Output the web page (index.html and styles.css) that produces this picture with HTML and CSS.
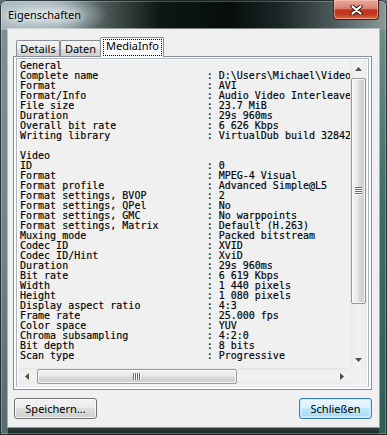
FILE: index.html
```html
<!DOCTYPE html>
<html lang="de">
  <head>
    <meta charset="UTF-8" />
    <title>Eigenschaften</title>
    <link rel="stylesheet" href="styles.css">
  </head>
  <body>
    <div class="window">
      <div class="titlebar">
        <span class="title">Eigenschaften</span>
        <button class="close" aria-label="Schließen">
          <svg width="13" height="10" viewBox="0 0 13 10">
            <path d="M2.5 1.5 L10.5 8.5 M10.5 1.5 L2.5 8.5" stroke="#3b1b14" stroke-width="4.2" stroke-linecap="round" />
            <path d="M2.5 1.5 L10.5 8.5 M10.5 1.5 L2.5 8.5" stroke="#ffffff" stroke-width="2.2" stroke-linecap="round" />
          </svg>
        </button>
      </div>

      <div class="client">
        <div class="tabs">
          <div class="tab tab-details">Details</div>
          <div class="tab tab-daten">Daten</div>
          <div class="tab tab-active"><span class="focus">MediaInfo</span></div>
        </div>

        <div class="panel">
          <div class="listbox">
<pre class="report">General
Complete name                  : D:\Users\Michael\Videos\Urlaub\clip.avi
Format                         : AVI
Format/Info                    : Audio Video Interleave
File size                      : 23.7 MiB
Duration                       : 29s 960ms
Overall bit rate               : 6 626 Kbps
Writing library                : VirtualDub build 32842/release

Video
ID                             : 0
Format                         : MPEG-4 Visual
Format profile                 : Advanced Simple@L5
Format settings, BVOP          : 2
Format settings, QPel          : No
Format settings, GMC           : No warppoints
Format settings, Matrix        : Default (H.263)
Muxing mode                    : Packed bitstream
Codec ID                       : XVID
Codec ID/Hint                  : XviD
Duration                       : 29s 960ms
Bit rate                       : 6 619 Kbps
Width                          : 1 440 pixels
Height                         : 1 080 pixels
Display aspect ratio           : 4:3
Frame rate                     : 25.000 fps
Color space                    : YUV
Chroma subsampling             : 4:2:0
Bit depth                      : 8 bits
Scan type                      : Progressive</pre>

            <div class="vscroll">
              <div class="arrow">
                <svg width="7" height="4" viewBox="0 0 7 4"><path d="M3.5 0 L7 4 L0 4 Z" fill="#4d4d4d" /></svg>
              </div>
              <div class="thumb thumb-v">
                <svg width="7" height="8" viewBox="0 0 7 8">
                  <path d="M0 0.5 H7 M0 2.5 H7 M0 4.5 H7 M0 6.5 H7" stroke="#6b6b6b" />
                  <path d="M0 1.5 H7 M0 3.5 H7 M0 5.5 H7 M0 7.5 H7" stroke="#fafafa" />
                </svg>
              </div>
              <div class="track"></div>
              <div class="arrow">
                <svg width="7" height="4" viewBox="0 0 7 4"><path d="M0 0 L7 0 L3.5 4 Z" fill="#4d4d4d" /></svg>
              </div>
            </div>

            <div class="hscroll">
              <div class="arrow">
                <svg width="4" height="7" viewBox="0 0 4 7"><path d="M0 3.5 L4 0 L4 7 Z" fill="#4d4d4d" /></svg>
              </div>
              <div class="thumb thumb-h">
                <svg width="8" height="7" viewBox="0 0 8 7">
                  <path d="M0.5 0 V7 M2.5 0 V7 M4.5 0 V7 M6.5 0 V7" stroke="#6b6b6b" />
                  <path d="M1.5 0 V7 M3.5 0 V7 M5.5 0 V7 M7.5 0 V7" stroke="#fafafa" />
                </svg>
              </div>
              <div class="track"></div>
              <div class="arrow">
                <svg width="4" height="7" viewBox="0 0 4 7"><path d="M0 0 L4 3.5 L0 7 Z" fill="#4d4d4d" /></svg>
              </div>
            </div>

            <div class="corner"></div>
          </div>
        </div>

        <div class="buttons">
          <button class="btn btn-save">Speichern...</button>
          <button class="btn btn-default">Schließen</button>
        </div>
      </div>
    </div>
  </body>
</html>
```

FILE: styles.css
```css
* {
  box-sizing: border-box;
}

html,
body {
  margin: 0;
}

body {
  width: 387px;
  height: 435px;
  overflow: hidden;
  background: #5b6d72;
  font-family: "Noto Sans", "Open Sans", sans-serif;
  font-size: 11px;
  color: #000;
}

/* Aero glass frame */
.window {
  width: 387px;
  height: 435px;
  display: flex;
  flex-direction: column;
  padding: 0 8px 8px 8px;
  border-radius: 6px 6px 0 0;
  background:
    radial-gradient(ellipse 62px 20px at 46px 15px, rgba(226, 235, 238, 0.9), rgba(226, 235, 238, 0)),
    linear-gradient(180deg, #7a9096 0, #6d858b 50%, #4f666c 100%) left 30px / 8px 100% no-repeat,
    linear-gradient(180deg, #6f8c87 0, #3f6e66 40%, #2e5a52 100%) right 30px / 8px 100% no-repeat,
    linear-gradient(180deg, #33403f 0, #1b2525 100%) left bottom / 100% 8px no-repeat,
    linear-gradient(90deg, #a4b4ba 0, #8c9da3 60px, #45524f 110px, #0e1716 160px, #070d0d 230px, #1c2727 280px, #4a5757 330px, #8a9a99 387px);
  box-shadow: inset 0 0 0 1px rgba(20, 30, 32, 0.85), inset 0 0 0 2px rgba(255, 255, 255, 0.25);
}

.titlebar {
  height: 29px;
  display: flex;
  align-items: flex-start;
}

.title {
  padding-top: 7px;
  line-height: 15px;
  text-shadow: 0 0 6px #fff, 0 0 10px rgba(255, 255, 255, 0.8);
}

.close {
  margin-left: auto;
  width: 46px;
  height: 20px;
  padding: 0;
  display: flex;
  align-items: center;
  justify-content: center;
  border: 1px solid #4c1e16;
  border-top: 0;
  border-radius: 0 0 4px 4px;
  background: linear-gradient(180deg, #e8a89a 0%, #d9816f 45%, #c0341d 52%, #c2391f 75%, #db6a42 100%);
  box-shadow: inset 0 0 0 1px rgba(255, 205, 190, 0.55);
}

.client {
  flex: 1;
  display: flex;
  flex-direction: column;
  padding: 8px 7px 0 5px;
  background: #f0f0f0;
  box-shadow: 0 0 0 1px rgba(255, 255, 255, 0.45);
}

/* Tabs */
.tabs {
  display: flex;
  align-items: flex-end;
  height: 20px;
  margin-bottom: -1px;
  padding-left: 3px;
  position: relative;
  z-index: 1;
}

.tab {
  height: 16px;
  margin-bottom: 1px;
  border: 1px solid #898c95;
  border-bottom: 0;
  border-radius: 2px 2px 0 0;
  background: linear-gradient(180deg, #f2f2f2 0%, #ebebeb 50%, #dddddd 50%, #cfcfcf 100%);
  line-height: 15px;
  text-align: center;
}

.tab-details {
  width: 44px;
}

.tab-daten {
  width: 41px;
}

.tab-active {
  width: 64px;
  height: 20px;
  margin-bottom: 0;
  margin-left: -1px;
  background: #fcfcfc;
}

.focus {
  display: block;
  height: 17px;
  margin: 1px 1px 0 2px;
  border: 1px dotted #000;
  line-height: 12px;
}

.panel {
  height: 334px;
  padding: 1px 2px 2px 2px;
  border: 1px solid #898c95;
  background: #fcfcfc;
}

/* Read-only edit box with scrollbars */
.listbox {
  height: 329px;
  padding: 1px;
  display: grid;
  grid-template-columns: 1fr 17px;
  grid-template-rows: 1fr 17px;
  border: 1px solid #abb5c1;
  border-bottom-color: #d5dce5;
  background: #fff;
}

.report {
  margin: 0;
  padding: 1px 0 0 2px;
  overflow: hidden;
  white-space: pre;
  font-family: "DejaVu Sans Mono", "Liberation Mono", monospace;
  font-size: 10px;
  line-height: 10px;
  background: #f0f0f0;
  color: #000;
  -webkit-text-stroke: 0.15px #000;
}

.vscroll,
.hscroll {
  display: flex;
  background: linear-gradient(90deg, #e3e3e3 0, #eeeeee 2px, #f2f2f2 50%, #ebebeb 100%);
}

.vscroll {
  flex-direction: column;
}

.hscroll {
  background: linear-gradient(180deg, #e3e3e3 0, #eeeeee 2px, #f2f2f2 50%, #ebebeb 100%);
}

.arrow {
  flex: none;
  width: 17px;
  height: 17px;
  display: flex;
  align-items: center;
  justify-content: center;
}

.track {
  flex: 1;
}

.thumb {
  flex: none;
  display: flex;
  align-items: center;
  justify-content: center;
  border: 1px solid #979797;
  border-radius: 2px;
  box-shadow: inset 0 0 0 1px rgba(255, 255, 255, 0.75);
}

.thumb-v {
  height: 226px;
  margin: 1px 1px 0 1px;
  background: linear-gradient(90deg, #f3f3f3 0%, #e8e8e8 45%, #d9d9d9 55%, #cdcdcd 100%);
}

.thumb-h {
  width: 200px;
  margin: 1px 0 1px 2px;
  background: linear-gradient(180deg, #f3f3f3 0%, #e8e8e8 45%, #d9d9d9 55%, #cdcdcd 100%);
}

.corner {
  background: #f0f0f0;
}

/* Dialog buttons */
.buttons {
  display: flex;
  justify-content: space-between;
  margin-top: 8px;
  padding-left: 1px;
}

.btn {
  height: 21px;
  padding: 0;
  border: 1px solid #707070;
  border-radius: 3px;
  background: linear-gradient(180deg, #f2f2f2 0%, #ebebeb 50%, #dddddd 50%, #cfcfcf 100%);
  box-shadow: inset 0 0 0 1px rgba(255, 255, 255, 0.8);
  font-family: "Noto Sans", "Open Sans", sans-serif;
  font-size: 11px;
  color: #000;
}

.btn-save {
  width: 83px;
}

.btn-default {
  width: 73px;
  border-color: #3c7fb1;
  background: linear-gradient(180deg, #eaf6fd 0%, #d9f0fc 50%, #bee6fd 50%, #a7d9f5 100%);
  box-shadow: inset 0 0 0 1px #c4e7fa, inset 0 0 0 2px rgba(255, 255, 255, 0.35);
}
```
